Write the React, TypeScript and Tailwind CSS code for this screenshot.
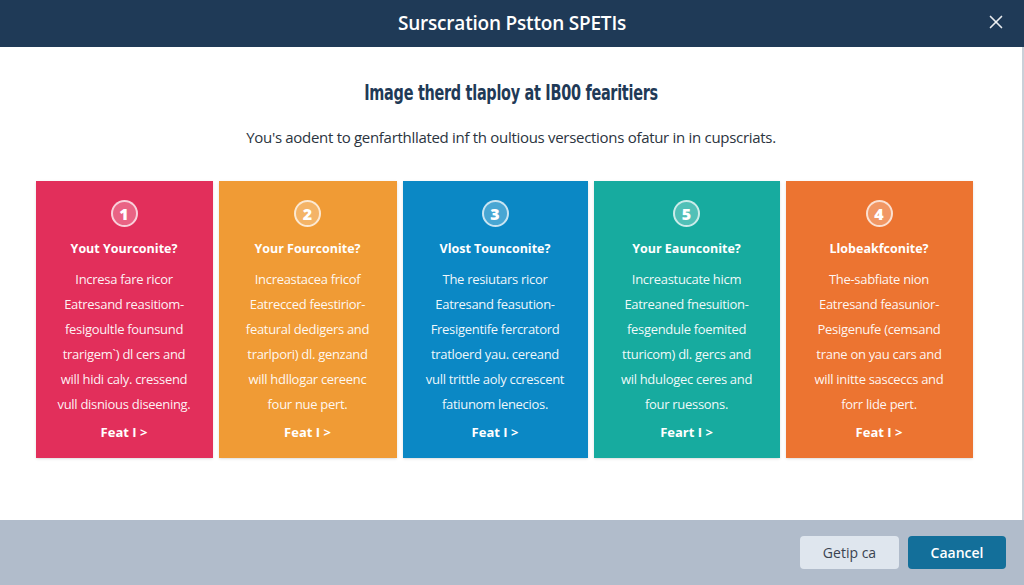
import { X } from 'lucide-react';

type Plan = {
  num: string;
  title: string;
  lines: string[];
  cta: string;
  bg: string;
  width: string;
};

const PLANS: Plan[] = [
  {
    num: '1',
    title: 'Yout Yourconite?',
    lines: [
      'Incresa fare ricor',
      'Eatresand reasitiom-',
      'fesigoultle founsund',
      'trarigem`) dl cers and',
      'will hidi caly. cressend',
      'vull disnious diseening.',
    ],
    cta: 'Feat I >',
    bg: 'bg-[#e22f5b]',
    width: 'w-[177px]',
  },
  {
    num: '2',
    title: 'Your Fourconite?',
    lines: [
      'Increastacea fricof',
      'Eatrecced feestirior-',
      'featural dedigers and',
      'trarlpori) dl. genzand',
      'will hdllogar cereenc',
      'four nue pert.',
    ],
    cta: 'Feat I >',
    bg: 'bg-[#f09b35]',
    width: 'w-[178px]',
  },
  {
    num: '3',
    title: 'Vlost Tounconite?',
    lines: [
      'The resiutars ricor',
      'Eatresand feasution-',
      'Fresigentife fercratord',
      'tratloerd yau. cereand',
      'vull trittle aoly ccrescent',
      'fatiunom lenecios.',
    ],
    cta: 'Feat I >',
    bg: 'bg-[#0b88c5]',
    width: 'w-[185px]',
  },
  {
    num: '5',
    title: 'Your Eaunconite?',
    lines: [
      'Increastucate hicm',
      'Eatreaned fnesuition-',
      'fesgendule foemited',
      'tturicom) dl. gercs and',
      'wil hdulogec ceres and',
      'four ruessons.',
    ],
    cta: 'Feart I >',
    bg: 'bg-[#17ab9f]',
    width: 'w-[186px]',
  },
  {
    num: '4',
    title: 'Llobeakfconite?',
    lines: [
      'The-sabfiate nion',
      'Eatresand feasunior-',
      'Pesigenufe (cemsand',
      'trane on yau cars and',
      'will initte sasceccs and',
      'forr lide pert.',
    ],
    cta: 'Feat I >',
    bg: 'bg-[#ec7431]',
    width: 'w-[187px]',
  },
];

function PlanCard({ plan }: { plan: Plan }) {
  return (
    <div className={`${plan.bg} ${plan.width} h-[277px] flex flex-col items-center pt-[19px] text-white shadow-sm`}>
      <div className="w-[27px] h-[27px] rounded-full border-2 border-white/70 bg-white/25 flex items-center justify-center text-[16px] font-extrabold leading-none">
        {plan.num}
      </div>
      <div className="mt-[16px] text-[12.5px] font-bold leading-none">{plan.title}</div>
      <div className="mt-[11px] flex flex-col items-center text-[13px] leading-[25px] text-white/95 tracking-[-0.3px]">
        {plan.lines.map((l) => (
          <span key={l} className="whitespace-nowrap">{l}</span>
        ))}
      </div>
      <div className="mt-[9px] text-[13px] font-bold leading-none">{plan.cta}</div>
    </div>
  );
}

export default function App() {
  return (
    <div className="w-[1024px] h-[585px] flex flex-col bg-white overflow-hidden" style={{ fontFamily: '"Open Sans", "Noto Sans", sans-serif' }}>
      {/* Header */}
      <div className="h-[47px] bg-[#1f3a57] flex items-center justify-center relative shrink-0">
        <span className="text-white text-[19px] font-semibold tracking-[-0.2px]">Surscration Pstton SPETIs</span>
        <button className="absolute right-[17px] top-[11px] text-white/90">
          <X size={22} strokeWidth={1.8} />
        </button>
      </div>

      {/* Body */}
      <div className="flex-1 flex flex-col items-center border-r-2 border-[#c9d0d8]">
        <h1
          className="mt-[35px] text-[22px] font-bold text-[#1f3a57] leading-none tracking-[-0.4px] whitespace-nowrap scale-x-[0.73]"
          style={{ fontFamily: '"DejaVu Sans Condensed", "DejaVu Sans", sans-serif' }}
        >
          Image therd tlaploy at IB00 fearitiers
        </h1>
        <p className="mt-[26px] text-[15px] text-[#2b3440] leading-none tracking-[-0.3px]">
          You's aodent to genfarthllated inf th oultious versections ofatur in in cupscriats.
        </p>
        <div className="mt-[36px] flex gap-[6px] pr-[14px]">
          {PLANS.map((p) => (
            <PlanCard key={p.num} plan={p} />
          ))}
        </div>
      </div>

      {/* Footer */}
      <div className="h-[65px] bg-[#b1bccb] flex items-center justify-end gap-[9px] pr-[18px] shrink-0">
        <button className="w-[99px] h-[33px] rounded-[4px] bg-[#dfe6ee] text-[#3a4350] text-[14px]">Getip ca</button>
        <button className="w-[98px] h-[33px] rounded-[4px] bg-[#136f9a] text-white text-[14px] font-semibold">Caancel</button>
      </div>
    </div>
  );
}
